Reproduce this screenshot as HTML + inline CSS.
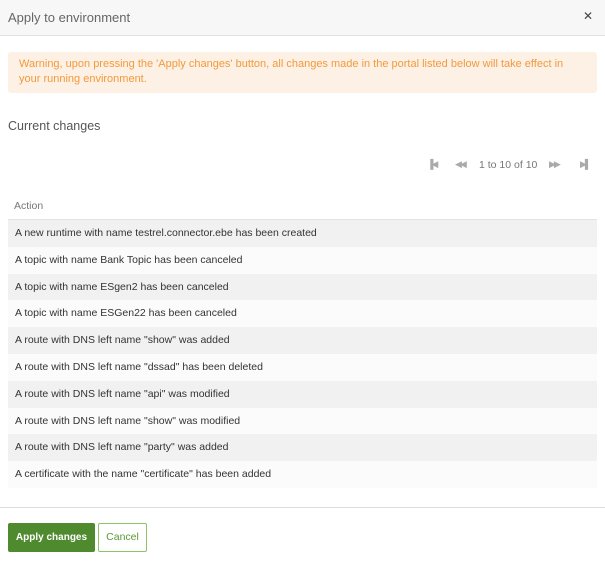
<!DOCTYPE html>
<html><head><meta charset="utf-8"><style>
*{margin:0;padding:0;box-sizing:border-box}
body{width:605px;height:563px;background:#fff;font-family:"Liberation Sans",sans-serif;position:relative;overflow:hidden;color:#333}
.hdr{position:absolute;left:0;top:0;width:605px;height:36px;background:#f7f7f7;border-bottom:1px solid #e2e2e2}
.hdr .t{position:absolute;left:8px;top:10px;font-size:13px;color:#666}
.hdr .x{position:absolute;right:12px;top:9px;font-size:12px;color:#444}
.warn{position:absolute;left:8px;top:52px;width:589px;height:41px;background:#fdf0e4;border-radius:3px;color:#f39a3c;font-size:11px;line-height:15px;padding:5px 11px}
.cc{position:absolute;left:8px;top:119px;font-size:12.5px;color:#555}
.pg{position:absolute;top:159px;font-size:10.5px;color:#777}
.ic{position:absolute;top:159px;font-size:9px;color:#aaa;letter-spacing:-2px}
.th{position:absolute;left:14px;top:200px;font-size:10.5px;color:#777}
.tl{position:absolute;left:8px;top:219px;width:589px;height:2px;background:#e3e3e3}
.row{position:absolute;left:8px;width:589px;height:26.8px;font-size:10.5px;line-height:26.8px;padding-left:7px;color:#333}
.a{background:#f1f1f1}.b{background:#fbfbfb}
.fl{position:absolute;left:0;top:507px;width:605px;height:1px;background:#dcdcdc}
.btn1{position:absolute;left:8px;top:523px;width:87px;height:29px;background:#4f8a2e;color:#fff;font-size:10px;font-weight:bold;text-align:center;line-height:29px;border-radius:2px}
.btn2{position:absolute;left:98px;top:523px;width:49px;height:29px;border:1px solid #8cc46a;color:#5a9a35;font-size:10.5px;text-align:center;line-height:27px;border-radius:2px}
</style></head><body>
<div class="hdr"><div class="t">Apply to environment</div><div class="x">✕</div></div>
<div class="warn">Warning, upon pressing the 'Apply changes' button, all changes made in the portal listed below will take effect in your running environment.</div>
<div class="cc">Current changes</div>
<div class="ic" style="left:427px">▐◀</div>
<div class="ic" style="left:455px">◀◀</div>
<div class="pg" style="left:479px">1 to 10 of 10</div>
<div class="ic" style="left:549px">▶▶</div>
<div class="ic" style="left:580px">▶▌</div>
<div class="th">Action</div>
<div class="tl"></div>
<div class="row a" style="top:220px">A new runtime with name testrel.connector.ebe has been created</div>
<div class="row b" style="top:246.8px">A topic with name Bank Topic has been canceled</div>
<div class="row a" style="top:273.6px">A topic with name ESgen2 has been canceled</div>
<div class="row b" style="top:300.4px">A topic with name ESGen22 has been canceled</div>
<div class="row a" style="top:327.2px">A route with DNS left name "show" was added</div>
<div class="row b" style="top:354px">A route with DNS left name "dssad" has been deleted</div>
<div class="row a" style="top:380.8px">A route with DNS left name "api" was modified</div>
<div class="row b" style="top:407.6px">A route with DNS left name "show" was modified</div>
<div class="row a" style="top:434.4px">A route with DNS left name "party" was added</div>
<div class="row b" style="top:461.2px">A certificate with the name "certificate" has been added</div>
<div class="fl"></div>
<div class="btn1">Apply changes</div>
<div class="btn2">Cancel</div>
</body></html>
